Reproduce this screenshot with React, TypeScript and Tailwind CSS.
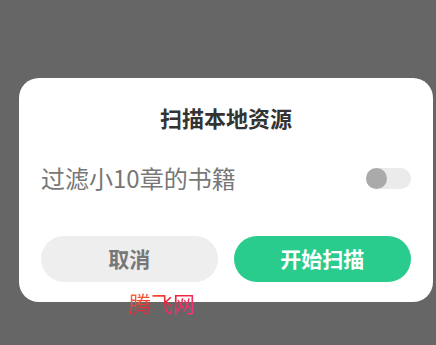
export default function App() {
  const font = { fontFamily: '"Noto Sans CJK SC", "Noto Sans", sans-serif' };
  return (
    <div className="relative h-[345px] w-[436px] overflow-hidden bg-[#666666] pt-[78px]" style={font}>
      <div className="ml-[19px] w-[414px] rounded-[20px] bg-white px-[22px] pb-[20px] pt-[24px]">
        <div className="text-center text-[22px] font-bold leading-[30px] text-[#333333]">扫描本地资源</div>
        <div className="mt-[31px] flex h-[30px] items-center justify-between">
          <span className="text-[24px] leading-[30px] text-[#777777]">过滤小10章的书籍</span>
          <div className="relative h-[21px] w-[45px] rounded-full bg-[#ebebeb]">
            <div className="absolute left-0 top-0 h-[21px] w-[21px] rounded-full bg-[#aaaaaa]" />
          </div>
        </div>
        <div className="mt-[43px] flex gap-[16px]">
          <button className="flex h-[46px] w-[177px] items-center justify-center rounded-full bg-[#eeeeee] text-[21px] font-bold text-[#777777]">取消</button>
          <button className="flex h-[46px] w-[178px] items-center justify-center rounded-full bg-[#2acc8d] text-[21px] font-bold text-white">开始扫描</button>
        </div>
      </div>
      <div className="absolute left-[129px] top-[288px] bg-gradient-to-br from-[#ff7a30] via-[#ee2233] to-[#ff3399] bg-clip-text text-[22px] font-normal leading-[28px] text-transparent">腾飞网</div>
    </div>
  );
}
